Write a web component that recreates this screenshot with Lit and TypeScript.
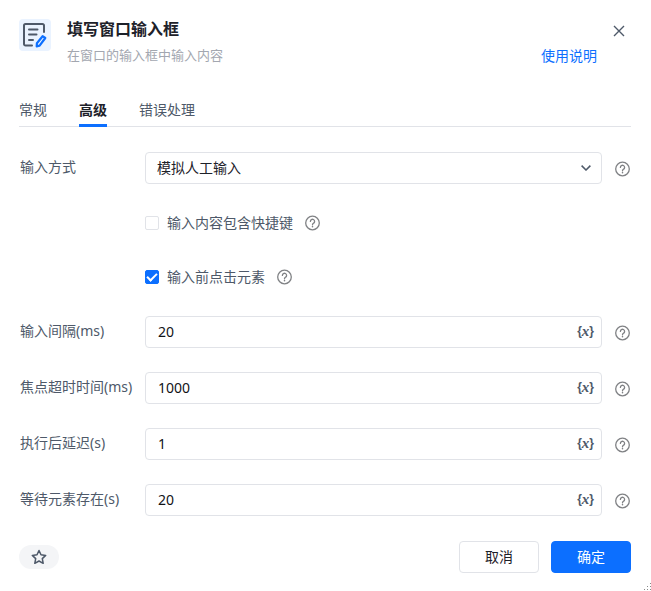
import { LitElement, html, css, svg } from "lit";
import { customElement, property, state } from "lit/decorators.js";
import { classMap } from "lit/directives/class-map.js";

const base = css`
  * {
    box-sizing: border-box;
  }
  button,
  input,
  select {
    font: inherit;
    color: inherit;
    margin: 0;
  }
  button {
    padding: 0;
    border: 0;
    background: none;
    cursor: pointer;
  }
  svg {
    display: block;
    fill: none;
  }
`;

@customElement("help-button")
export class HelpButton extends LitElement {
  static styles = [
    base,
    css`
      :host {
        display: block;
        flex: none;
        color: #808285;
      }
      button {
        display: block;
      }
    `,
  ];

  render() {
    return html`<button type="button" aria-label="帮助">
      <svg width="16" height="16" viewBox="0 0 16 16" stroke="currentColor" stroke-width="1.3" stroke-linecap="round">
        <circle cx="8.5" cy="8" r="6.8" />
        <path d="M6.400 6.400a2.100 2.100 0 1 1 3.300 1.700C8.900 8.700 8.500 9 8.500 9.800" />
        <path d="M8.500 11.600v.2" stroke-width="1.500" />
      </svg>
    </button>`;
  }
}

@customElement("number-row")
export class NumberRow extends LitElement {
  @property() label = "";
  @property() value = "";

  static styles = [
    base,
    css`
      :host {
        display: block;
      }
      .row {
        display: flex;
        align-items: center;
      }
      .label {
        flex: none;
        width: 125px;
        padding-bottom: 2px;
        color: #4e5969;
      }
      .field {
        flex: 1;
        min-width: 0;
        height: 32px;
        display: flex;
        align-items: center;
        border: 1px solid #e1e3e8;
        border-radius: 4px;
        padding: 0 7px 0 12px;
      }
      .input {
        flex: 1;
        min-width: 0;
        border: 0;
        outline: 0;
        padding: 0;
        background: none;
        color: #111317;
      }
      .variable {
        display: flex;
        align-items: center;
        padding-bottom: 2px;
        color: #4e5969;
        font: 700 12px/16px "Liberation Sans", sans-serif;
      }
      .x {
        padding-bottom: 1px;
        font: italic 700 15px/16px "Liberation Serif", serif;
      }
      help-button {
        margin-left: 12px;
        margin-right: 1px;
        padding-top: 2px;
      }
    `,
  ];

  render() {
    return html`<div class="row">
      <label class="label" for="value">${this.label}</label>
      <div class="field">
        <input class="input" id="value" type="text" .value=${this.value} />
        <button class="variable" type="button" aria-label="插入变量">{<span class="x">x</span>}</button>
      </div>
      <help-button></help-button>
    </div>`;
  }
}

@customElement("app-root")
export class AppRoot extends LitElement {
  @state() private tab = "高级";

  private tabs = ["常规", "高级", "错误处理"];
  private checks = [
    { id: "hotkey", label: "输入内容包含快捷键", checked: false },
    { id: "click", label: "输入前点击元素", checked: true },
  ];
  private numbers = [
    { label: "输入间隔(ms)", value: "20" },
    { label: "焦点超时时间(ms)", value: "1000" },
    { label: "执行后延迟(s)", value: "1" },
    { label: "等待元素存在(s)", value: "20" },
  ];

  static styles = [
    base,
    css`
      :host {
        display: flex;
        flex-direction: column;
        position: relative;
        min-height: 100vh;
        box-sizing: border-box;
        padding: 17px 20px 18px;
        background: #fff;
        color: #1d2129;
        font: 14px/20px "Noto Sans", "Noto Sans CJK SC", sans-serif;
      }
      .header {
        display: flex;
        align-items: flex-start;
      }
      .logo {
        flex: none;
        width: 32px;
        height: 32px;
        margin: 2px 16px 0 -1px;
      }
      .titles {
        flex: 1;
      }
      .title {
        margin: 0;
        font-size: 16px;
        line-height: 24px;
        font-weight: 700;
      }
      .subtitle {
        margin: 4px 0 0;
        font-size: 13px;
        line-height: 20px;
        color: #a3a7b0;
      }
      .side {
        display: flex;
        flex-direction: column;
        align-items: flex-end;
      }
      .close {
        margin: 7px 6px 0 0;
        color: #4e5969;
      }
      .guide {
        margin: 8px 34px 0 0;
        color: #0c6fff;
        text-decoration: none;
      }
      .tabs {
        display: flex;
        gap: 32px;
        margin: 34px 0 25px -1px;
        border-bottom: 1px solid #e1e3e8;
      }
      .tab {
        height: 27px;
        margin-bottom: -1px;
        padding-bottom: 4px;
        line-height: 20px;
        border-bottom: 3px solid transparent;
        color: #4e5969;
      }
      .tab.active {
        border-color: #0c6fff;
        color: #1d2129;
        font-weight: 700;
      }
      .form {
        display: flex;
        flex-direction: column;
        gap: 24px;
      }
      .row {
        display: flex;
        align-items: center;
      }
      .label {
        flex: none;
        width: 125px;
        padding-bottom: 2px;
        color: #4e5969;
      }
      .select-box {
        flex: 1;
        min-width: 0;
        display: grid;
        align-items: center;
      }
      .select {
        grid-area: 1 / 1;
        width: 100%;
        height: 32px;
        appearance: none;
        border: 1px solid #e1e3e8;
        border-radius: 4px;
        background: #fff;
        padding: 0 30px 0 11px;
      }
      .chevron {
        grid-area: 1 / 1;
        justify-self: end;
        margin-right: 11px;
        color: #4e5969;
        pointer-events: none;
      }
      .row help-button {
        margin-left: 12px;
        margin-right: 1px;
        padding-top: 2px;
      }
      .check-row {
        display: flex;
        align-items: center;
        height: 30px;
        margin-left: 125px;
        color: #4e5969;
      }
      .check {
        display: flex;
        align-items: center;
        gap: 8px;
      }
      .box {
        appearance: none;
        width: 14px;
        height: 14px;
        border: 1px solid #e1e3e8;
        border-radius: 2px;
        background: #fff;
        display: grid;
        place-items: center;
      }
      .box:checked {
        background: #0c6fff;
        border-color: #0c6fff;
      }
      .box:checked::before {
        content: "";
        width: 8px;
        height: 4px;
        margin-bottom: 2px;
        border: solid #fff;
        border-width: 0 0 2px 2px;
        transform: rotate(-45deg);
      }
      .check-row help-button {
        margin-left: 11px;
      }
      .footer {
        display: flex;
        align-items: center;
        gap: 12px;
        margin-top: 25px;
      }
      .star {
        width: 40px;
        height: 24px;
        margin: 0 auto 0 -1px;
        border-radius: 12px;
        background: #f4f5f7;
        color: #4e5969;
        display: grid;
        place-items: center;
      }
      .action {
        width: 80px;
        height: 32px;
        border: 1px solid #e1e3e8;
        border-radius: 4px;
      }
      .action.primary {
        background: #0c6fff;
        border-color: #0c6fff;
        color: #fff;
      }
      .grip {
        position: absolute;
        right: 0;
        bottom: 0;
        fill: #8a8a8a;
      }
    `,
  ];

  private renderGrip() {
    const dots = [[6, 0], [3, 3], [6, 3], [0, 6], [3, 6], [6, 6]];
    return html`<svg class="grip" width="7" height="8" viewBox="0 0 7 8" aria-hidden="true">
      ${dots.map(([x, y]) => svg`<rect x=${x} y=${y} width="1" height="1" />`)}
    </svg>`;
  }

  render() {
    return html`
      <header class="header">
        <svg class="logo" viewBox="0 0 32 32" stroke-linecap="round" stroke-linejoin="round" aria-hidden="true">
          <rect width="32" height="32" rx="4" fill="#eaf3ff" />
          <g stroke="#4e5969" stroke-width="2">
            <path d="M13 26.500H6.500a1.500 1.500 0 0 1-1.500-1.500V6.500A1.500 1.500 0 0 1 6.500 5h17A1.500 1.500 0 0 1 25 6.500V13" />
            <path d="M10 10.500h8.500M10 15.500h7.500M10 21h4" />
          </g>
          <path d="M23.600 17.200l2.700 1.800-5.700 7.700-2.900.600.200-3z" stroke="#0c6fff" stroke-width="2.200" />
        </svg>
        <div class="titles">
          <h1 class="title">填写窗口输入框</h1>
          <p class="subtitle">在窗口的输入框中输入内容</p>
        </div>
        <div class="side">
          <button class="close" type="button" aria-label="关闭">
            <svg width="12" height="14" viewBox="0 0 12 14" stroke="currentColor" stroke-width="1.400">
              <path d="M1 2l10 10M11 2L1 12" />
            </svg>
          </button>
          <a class="guide" href="#">使用说明</a>
        </div>
      </header>

      <nav class="tabs" role="tablist">
        ${this.tabs.map(
          (name) => html`<button
            type="button"
            role="tab"
            aria-selected=${name === this.tab}
            class=${classMap({ tab: true, active: name === this.tab })}
            @click=${() => (this.tab = name)}
          >${name}</button>`
        )}
      </nav>

      <main class="form">
        <div class="row">
          <label class="label" for="mode">输入方式</label>
          <div class="select-box">
            <select class="select" id="mode">
              <option>模拟人工输入</option>
            </select>
            <svg class="chevron" width="10" height="6" viewBox="0 0 10 6" stroke="currentColor" stroke-width="1.500">
              <path d="M.6.600L5 5 9.400.600" />
            </svg>
          </div>
          <help-button></help-button>
        </div>
        ${this.checks.map(
          (c) => html`<div class="check-row">
            <label class="check" for=${c.id}>
              <input class="box" id=${c.id} type="checkbox" .checked=${c.checked} />${c.label}
            </label>
            <help-button></help-button>
          </div>`
        )}
        ${this.numbers.map((n) => html`<number-row .label=${n.label} .value=${n.value}></number-row>`)}
      </main>

      <footer class="footer">
        <button class="star" type="button" aria-label="收藏">
          <svg width="16" height="16" viewBox="0 0 16 16" stroke="currentColor" stroke-width="1.500" stroke-linejoin="round">
            <path d="M8 1.500l2 4.300 4.700.600-3.400 3.200.900 4.700L8 12l-4.200 2.300.900-4.700L1.300 6.400 6 5.800z" />
          </svg>
        </button>
        <button class="action" type="button">取消</button>
        <button class="action primary" type="button">确定</button>
      </footer>
      ${this.renderGrip()}
    `;
  }
}
